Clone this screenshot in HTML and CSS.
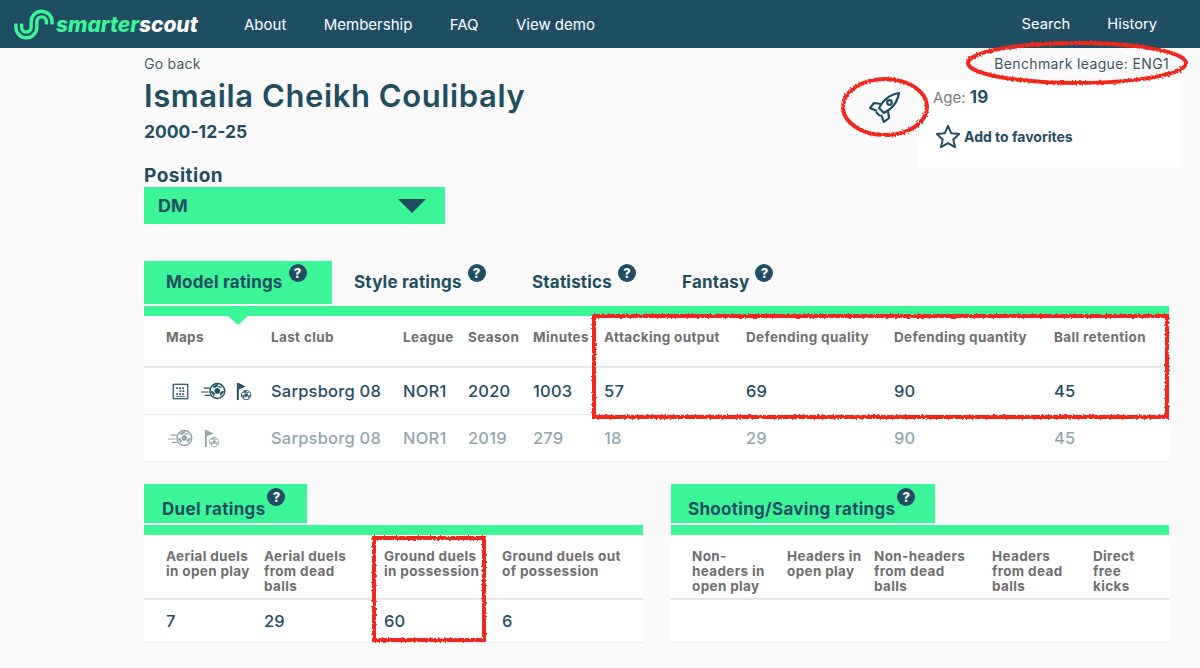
FILE: index.html
```html
<!DOCTYPE html>
<html lang="en">
<head>
    <meta charset="UTF-8">
    <meta name="viewport" content="width=device-width, initial-scale=1.0">
    <title>smarterscout - Ismaila Cheikh Coulibaly</title>
    <link rel="stylesheet" href="styles.css">
</head>
<body>

<svg width="0" height="0" class="defs">
    <symbol id="ball" viewBox="0 0 20 20">
        <circle cx="10" cy="10" r="8.6" fill="none" stroke="currentColor" stroke-width="1.6"/>
        <path d="M10 6.6l3.2 2.3-1.2 3.7H8l-1.2-3.7zM10 1.6v2.6l-2.6 1.8-3-1M10 4.2l2.6 1.8 3-1M2.2 11l2.6-.6 2 2.4-.8 3M17.8 11l-2.6-.6-2 2.4.8 3" fill="currentColor" stroke="currentColor" stroke-width=".8"/>
    </symbol>
    <symbol id="heat" viewBox="0 0 20 20">
        <rect x="1.5" y="1.5" width="17" height="17" fill="none" stroke="currentColor" stroke-width="1.4"/>
        <path d="M5 5h2v2H5zM8.500 5h2v2h-2zM12 5h2v2h-2zM9 8.500h2v2H9zM12.500 8.500h2v2h-2zM5 12h2v2H5zM8.500 12h2v2h-2zM12 12h2v2h-2zM5 15.200h10v1H5z" fill="currentColor"/>
    </symbol>
    <symbol id="shot" viewBox="0 0 26 18">
        <use href="#ball" x="8" y="0" width="18" height="18"/>
        <path d="M3 6h6M0 10h8M4 13.500h6" stroke="currentColor" stroke-width="1.2" fill="none"/>
    </symbol>
    <symbol id="flag" viewBox="0 0 16 20">
        <path d="M1.500 1v18" stroke="currentColor" stroke-width="2" fill="none"/>
        <path d="M2.500 1l7 3.800-7 3.200z" fill="currentColor"/>
        <use href="#ball" x="4.500" y="8" width="11.500" height="11.500"/>
    </symbol>
</svg>

<header class="topbar">
    <a class="logo" href="#">
        <svg class="logo-mark" viewBox="0 0 42 32" width="40" height="31">
            <path d="M2 15v4a11 11 0 0 0 22 0v-6a5 5 0 0 1 10 0v3" fill="none" stroke="#3bf598" stroke-width="3.600"/>
            <path d="M8 15v4a5 5 0 0 0 10 0v-6a11 11 0 0 1 22 0v3" fill="none" stroke="#3bf598" stroke-width="3.600"/>
        </svg>
        <span class="logo-text"><span class="logo-green">smarter</span>scout</span>
    </a>
    <nav class="nav-main">
        <a href="#">About</a>
        <a href="#">Membership</a>
        <a href="#">FAQ</a>
        <a href="#">View demo</a>
    </nav>
    <nav class="nav-side">
        <a href="#">Search</a>
        <a href="#">History</a>
    </nav>
</header>

<main class="container">
    <section class="hero">
        <div class="hero-left">
            <a class="back" href="#">Go back</a>
            <h1>Ismaila Cheikh Coulibaly</h1>
            <div class="birth">2000-12-25</div>
            <div class="position-label">Position</div>
            <div class="position-select">
                <span>DM</span>
                <span class="select-arrow"></span>
            </div>
        </div>
        <div class="hero-right">
            <div class="benchmark">Benchmark league: ENG1</div>
            <div class="hero-info">
                <svg class="rocket" viewBox="0 0 32 32" width="32" height="32">
                    <g fill="none" stroke="#1f4e63" stroke-width="2.200" stroke-linejoin="round">
                        <path d="M30 2C24 3 18 6 14 11l-4 6 5 5 6-4c5-4 8-10 9-16z"/>
                        <circle cx="20.500" cy="11.500" r="2.300"/>
                        <path d="M12 13l-7-1-4 5 7 3M19 20l1 7-5 4-3-7"/>
                        <path d="M7 21l4 4"/>
                    </g>
                </svg>
                <div class="info-card">
                    <div class="age">Age: <b>19</b></div>
                    <div class="favorite">
                        <svg viewBox="0 0 26 25" width="26" height="25">
                            <path d="M13 2l3.300 7.300 7.900.8-5.900 5.300 1.700 7.800L13 19.200l-7 4 1.700-7.800L1.800 10.100l7.900-.8z" fill="none" stroke="#1f4e63" stroke-width="2" stroke-linejoin="round"/>
                        </svg>
                        <span>Add to favorites</span>
                    </div>
                </div>
            </div>
        </div>
    </section>

    <div class="tabs">
        <div class="tab active">Model ratings<span class="help">?</span></div>
        <div class="tab">Style ratings<span class="help">?</span></div>
        <div class="tab">Statistics<span class="help">?</span></div>
        <div class="tab">Fantasy<span class="help">?</span></div>
    </div>
    <div class="green-bar"><span class="bar-caret"></span></div>

    <section class="table ratings">
        <div class="row head">
            <div>Maps</div><div>Last club</div><div>League</div><div>Season</div><div>Minutes</div>
            <div>Attacking output</div><div>Defending quality</div><div>Defending quantity</div><div>Ball retention</div>
        </div>
        <div class="row">
            <div class="maps">
                <svg class="ic-heat"><use href="#heat"/></svg>
                <svg class="ic-shot"><use href="#shot"/></svg>
                <svg class="ic-flag"><use href="#flag"/></svg>
            </div>
            <div>Sarpsborg 08</div><div>NOR1</div><div>2020</div><div>1003</div>
            <div>57</div><div>69</div><div>90</div><div>45</div>
        </div>
        <div class="row faded">
            <div class="maps">
                <svg class="ic-shot"><use href="#shot"/></svg>
                <svg class="ic-flag"><use href="#flag"/></svg>
            </div>
            <div>Sarpsborg 08</div><div>NOR1</div><div>2019</div><div>279</div>
            <div>18</div><div>29</div><div>90</div><div>45</div>
        </div>
    </section>

    <div class="panels">
        <section class="panel">
            <div class="panel-tab duel">Duel ratings<span class="help">?</span></div>
            <div class="green-bar"></div>
            <div class="table duels">
                <div class="row head">
                    <div>Aerial duels in open play</div>
                    <div>Aerial duels from dead balls</div>
                    <div>Ground duels in possession</div>
                    <div>Ground duels out of possession</div>
                </div>
                <div class="row">
                    <div>7</div><div>29</div><div>60</div><div>6</div>
                </div>
            </div>
        </section>
        <section class="panel">
            <div class="panel-tab shooting">Shooting/Saving ratings<span class="help">?</span></div>
            <div class="green-bar"></div>
            <div class="table shots">
                <div class="row head">
                    <div>Non-headers in open play</div>
                    <div>Headers in open play</div>
                    <div>Non-headers from dead balls</div>
                    <div>Headers from dead balls</div>
                    <div>Direct free kicks</div>
                </div>
                <div class="row empty"></div>
            </div>
        </section>
    </div>
</main>

<!-- red pen marks on top of the page -->
<svg class="marks" viewBox="0 0 1200 668" width="1200" height="668">
    <filter id="rough" x="-5%" y="-20%" width="110%" height="140%">
        <feTurbulence type="fractalNoise" baseFrequency="0.5" numOctaves="2" seed="3"/>
        <feDisplacementMap in="SourceGraphic" scale="3"/>
    </filter>
    <g fill="none" stroke="#f1261c" stroke-width="4" filter="url(#rough)">
        <ellipse cx="1077" cy="63" rx="109" ry="20"/>
        <ellipse cx="885" cy="107" rx="42" ry="28"/>
        <rect x="594" y="316" width="573" height="101"/>
        <rect x="374" y="538" width="110" height="102"/>
    </g>
</svg>

</body>
</html>
```

FILE: styles.css
```css
body {
    font-family: "Inter", "Open Sans", sans-serif;
    background-color: #fafafa;
    color: #1f4e63;
    margin: 0;
    padding: 0;
    position: relative;
    height: 668px;
    overflow: hidden;
}

a {
    color: inherit;
    text-decoration: none;
}

.defs {
    position: absolute;
}

.topbar {
    height: 48px;
    background-color: #1f4e63;
    color: #fff;
    display: flex;
    align-items: center;
    font-size: 15px;
}

.logo {
    display: flex;
    align-items: center;
    margin-left: 14px;
    width: 230px;
}

.logo-mark {
    flex: none;
}

.logo-text {
    font-size: 21px;
    font-weight: 800;
    font-style: italic;
    letter-spacing: -0.05px;
    margin-left: 2px;
}

.logo-green {
    color: #3bf598;
}

.nav-main {
    display: flex;
    gap: 37.4px;
}

.nav-side {
    display: flex;
    gap: 37px;
    margin-left: auto;
    margin-right: 43px;
    font-size: 14.7px;
}

.container {
    width: 1025px;
    margin-left: 144px;
}

.hero {
    display: flex;
    justify-content: space-between;
    height: 213px;
}

.back {
    display: block;
    font-size: 14px;
    letter-spacing: 0.25px;
    color: #4a5a62;
    margin-top: 7px;
    line-height: 17px;
}

h1 {
    font-size: 31px;
    font-weight: 600;
    letter-spacing: 0.6px;
    line-height: 38px;
    margin: 5px 0 0;
}

.birth {
    font-size: 17.5px;
    font-weight: 700;
    line-height: 22px;
    margin-top: 6px;
}

.position-label {
    font-size: 19px;
    font-weight: 700;
    letter-spacing: 0.5px;
    line-height: 24px;
    margin-top: 21px;
    margin-bottom: -1px;
}

.position-select {
    width: 301px;
    height: 37px;
    box-sizing: border-box;
    padding: 0 19px 0 14px;
    background-color: #3bf598;
    display: flex;
    align-items: center;
    justify-content: space-between;
    font-size: 18px;
    font-weight: 700;
}

.select-arrow {
    width: 0;
    height: 0;
    border-left: 14px solid transparent;
    border-right: 14px solid transparent;
    border-top: 14px solid #1f4e63;
}

.hero-right {
    display: flex;
    flex-direction: column;
    align-items: flex-end;
}

.benchmark {
    font-size: 14px;
    letter-spacing: 0.36px;
    line-height: 17px;
    margin-top: 7px;
    color: #3e5560;
}

.hero-info {
    display: flex;
    margin-top: 8px;
    margin-right: -14px;
}

.rocket {
    margin: 11px 18px 0 0;
}

.info-card {
    width: 264px;
    height: 87px;
    background-color: #fff;
    box-sizing: border-box;
    padding: 6px 14px;
}

.age {
    color: #7b7b7b;
    font-size: 15px;
    line-height: 22px;
}

.age b {
    color: #1f4e63;
    font-size: 17px;
}

.favorite {
    display: flex;
    align-items: center;
    gap: 3px;
    font-size: 14px;
    font-weight: 700;
    margin: 15px 0 0 2px;
}

.tabs {
    display: flex;
    height: 43px;
}

.tab {
    position: relative;
    height: 43px;
    line-height: 43px;
    padding-left: 22px;
    font-size: 17px;
    font-weight: 700;
    letter-spacing: 0.2px;
    box-sizing: border-box;
    white-space: nowrap;
}

.tab:nth-child(1) { width: 188px; }
.tab:nth-child(2) { width: 178px; }
.tab:nth-child(3) { width: 150px; }
.tab:nth-child(4) { width: 150px; }

.tab.active,
.panel-tab {
    background-color: #3bf598;
}

.help {
    display: inline-block;
    width: 18px;
    height: 18px;
    border-radius: 50%;
    background-color: #1f4e63;
    color: #fff;
    font-size: 13px;
    font-weight: 800;
    letter-spacing: 0;
    line-height: 18px;
    text-align: center;
    vertical-align: top;
    margin: 3px 0 0 6px;
}

.green-bar {
    position: relative;
    height: 10px;
    margin-top: 2px;
    background-color: #3bf598;
}

.bar-caret {
    position: absolute;
    left: 84px;
    top: 10px;
    width: 0;
    height: 0;
    border-left: 10px solid transparent;
    border-right: 10px solid transparent;
    border-top: 9px solid #3bf598;
}

.table {
    background-color: #fff;
}

.row {
    display: grid;
    align-items: center;
    padding-left: 22px;
    border-bottom: 1px solid #ececec;
    font-size: 16.5px;
    font-weight: 500;
    letter-spacing: 0.2px;
    color: #1f4e63;
    height: 47px;
    box-sizing: border-box;
}

.row.head {
    align-items: start;
    font-size: 13.5px;
    font-weight: 700;
    letter-spacing: 0.35px;
    color: #6f6f6f;
    line-height: 15px;
    height: 52px;
    padding-top: 14px;
    border-bottom: 2px solid #e6e6e6;
}

.row.faded {
    color: #93a6ae;
}

.ratings .row {
    grid-template-columns: 105px 132px 65px 65px 71px 142px 148px 160px 1fr;
}

.maps {
    display: flex;
    align-items: center;
    margin-left: 6px;
}

.maps svg {
    display: block;
}

.ic-heat {
    width: 17px;
    height: 17px;
    margin-right: 12px;
}

.ic-shot {
    width: 25px;
    height: 18px;
    margin-right: 10px;
}

.ic-flag {
    width: 16px;
    height: 19px;
}

.faded .maps {
    margin-left: 2px;
}

.faded .ic-shot {
    margin-right: 11px;
}

.panels {
    display: grid;
    grid-template-columns: 499px 498px;
    gap: 28px;
    margin-top: 22px;
}

.panel-tab {
    position: relative;
    height: 39px;
    line-height: 51px;
    padding-left: 18px;
    font-size: 17px;
    font-weight: 700;
    letter-spacing: 0.3px;
    box-sizing: border-box;
    white-space: nowrap;
}

.panel-tab .help {
    margin: 4px 0 0 2px;
}

.panel-tab.duel { width: 163px; }
.panel-tab.shooting { width: 264px; padding-left: 17px; }

.panel .green-bar {
    margin-top: 2px;
}

.panel .row.head {
    height: 65px;
    padding-top: 14px;
}

.panel .row {
    height: 43px;
}

.panel .row.head > div {
    padding-right: 12px;
}

.duels .row {
    grid-template-columns: 98px 120px 118px 1fr;
}

.duels .row.head > div:nth-child(2) {
    padding-right: 20px;
}

.shots .row {
    grid-template-columns: 95px 87px 118px 101px 1fr;
}

.shots .row.head {
    padding-left: 21px;
    padding-right: 30px;
}

.marks {
    position: absolute;
    left: 0;
    top: 0;
    pointer-events: none;
}
```
